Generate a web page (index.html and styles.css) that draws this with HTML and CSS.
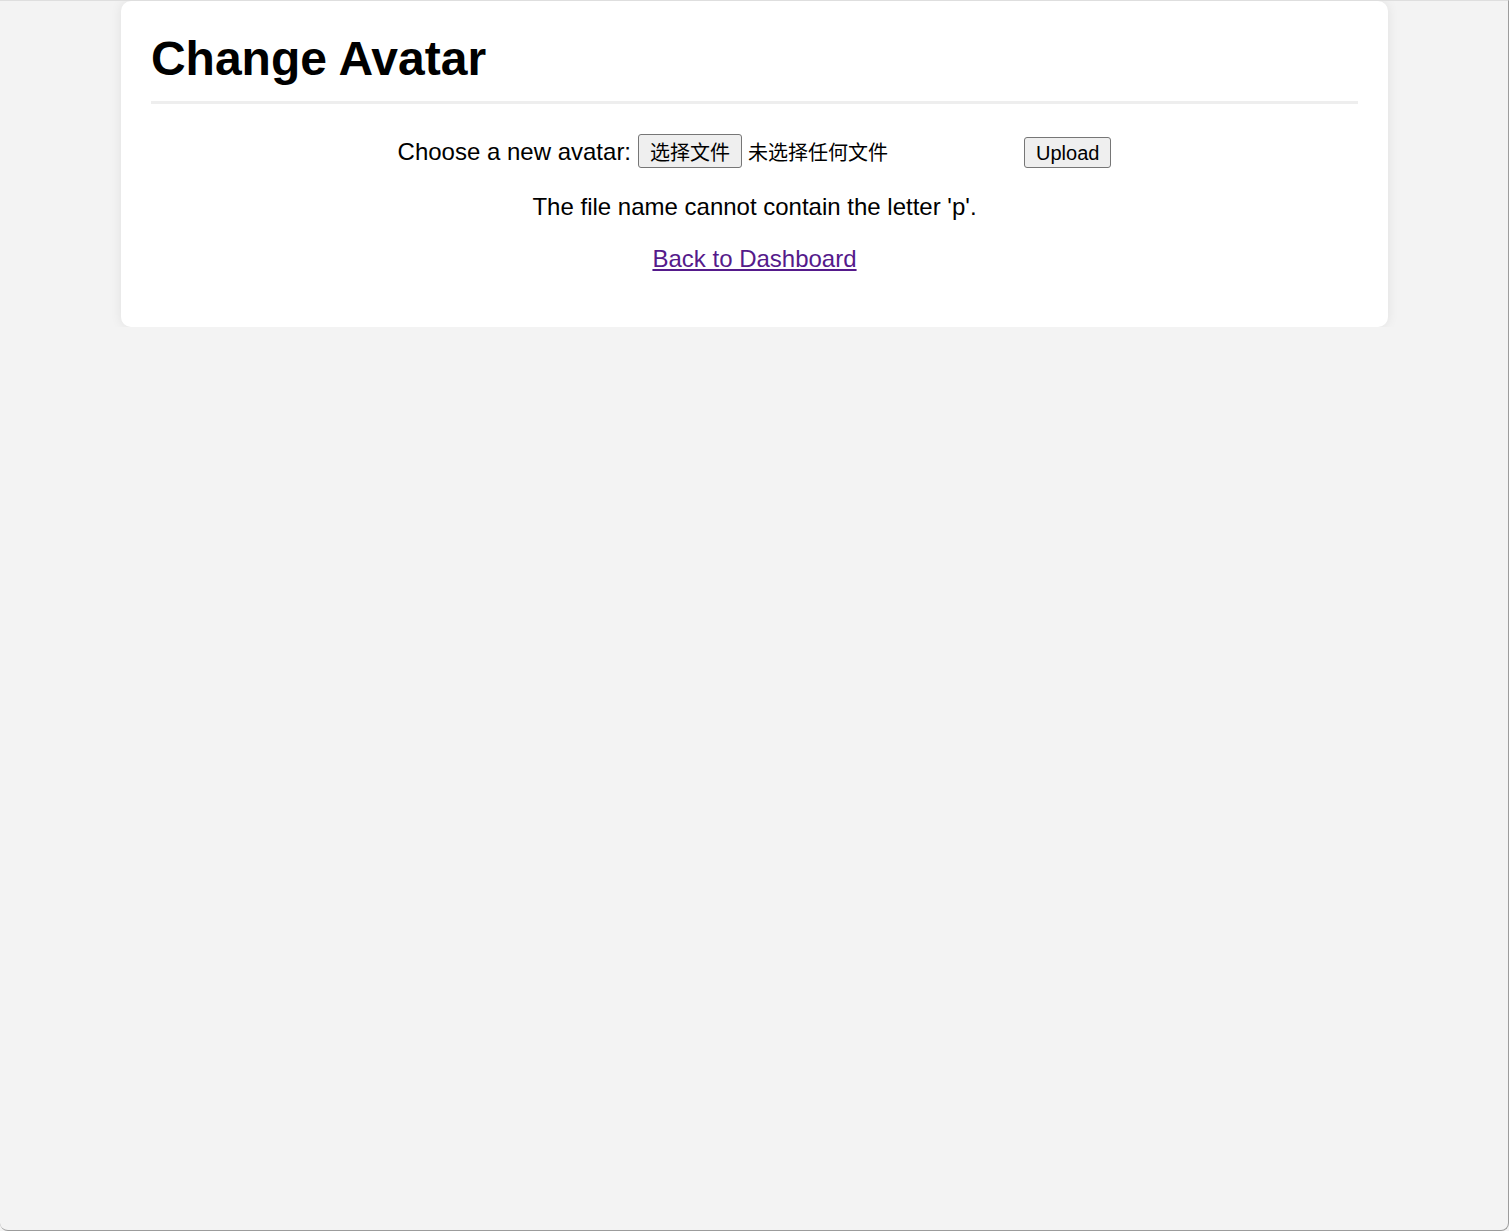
FILE: index.html
```html
<!DOCTYPE html>
<html lang="en">
<head>
<meta charset="utf-8">
<title>Change Avatar</title>
<link rel="stylesheet" href="styles.css">
</head>
<body>
<div class="card">
  <h1 class="title">Change Avatar</h1>
  <form class="upload-form">
    <div class="row">
      <span class="label">Choose a new avatar:</span>
      <span class="file-input">
        <button type="button" class="btn btn-file">选择文件</button>
        <span class="file-name">未选择任何文件</span>
      </span>
      <button type="button" class="btn btn-upload">Upload</button>
    </div>
    <p class="note">The file name cannot contain the letter 'p'.</p>
    <p class="back"><a class="back-link" href="#">Back to Dashboard</a></p>
  </form>
</div>
</body>
</html>
```

FILE: styles.css
```css
html {
  background: #f3f3f3;
}
html::after {
  content: "";
  position: fixed;
  inset: 0;
  border-top: 1px solid #dedede;
  border-right: 1px solid #9c9c9c;
  border-bottom: 1px solid #9c9c9c;
  border-radius: 0 0 8px 8px;
  pointer-events: none;
}
body {
  margin: 0;
  padding-top: 1px;
  font-family: "Liberation Sans", Arial, "Noto Sans CJK SC", sans-serif;
  color: #000;
}
.card {
  width: 80%;
  margin: 0 auto;
  padding: 30px;
  background: #fff;
  border-radius: 10px;
  box-shadow: 0 0 12px rgba(0, 0, 0, 0.08);
}
.title {
  margin: 0;
  font-size: 48px;
  font-weight: bold;
  line-height: 55px;
  padding-bottom: 15px;
  border-bottom: 3px solid #eeeeee;
}
.upload-form {
  text-align: center;
  font-size: 24px;
  line-height: 27px;
  padding-top: 30px;
}
.row {
  display: flex;
  justify-content: center;
  align-items: baseline;
  gap: 7px;
}
.file-input {
  display: inline-flex;
  align-items: baseline;
  gap: 6px;
  width: 379px;
}
.btn {
  box-sizing: border-box;
  font-family: "Liberation Sans", Arial, "Noto Sans CJK SC", sans-serif;
  font-size: 20px;
  color: #000;
  background: #efefef;
  border: 1px solid #767676;
  border-radius: 3px;
  margin: 0;
}
.btn-file {
  height: 34px;
  line-height: 28px;
  padding: 4px 11px 0;
}
.btn-upload {
  height: 31px;
  line-height: 27px;
  padding: 2px 11px 0;
}
.file-name {
  font-size: 20px;
}
.note {
  margin: 25px 0 0;
}
.back {
  margin: 25px 0 25px;
}
.back-link {
  color: #551a8b;
}
```
